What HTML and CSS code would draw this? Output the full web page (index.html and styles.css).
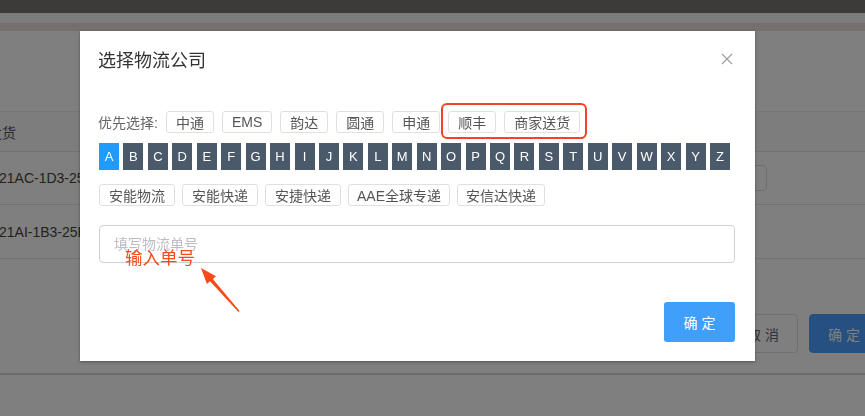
FILE: index.html
```html
<!DOCTYPE html>
<html lang="zh-CN">
<head>
<meta charset="utf-8">
<title>选择物流公司</title>
<link rel="stylesheet" href="styles.css">
</head>
<body>
<div class="page">
  <div class="topbar"></div>
  <div class="band"><div class="band-a"></div><div class="band-b"></div></div>
  <div class="main">
    <div class="table">
      <div class="tr th"><span class="cell head-cell">发货</span></div>
      <div class="tr"><span class="cell">21AC-1D3-25B6</span><span class="field"></span></div>
      <div class="tr"><span class="cell">21AI-1B3-25E8</span></div>
    </div>
    <div class="actions">
      <button class="btn">取 消</button>
      <button class="btn btn-primary">确 定</button>
    </div>
  </div>
</div>
<div class="mask"></div>
<div class="modal">
  <div class="modal-head">
    <h2 class="modal-title">选择物流公司</h2>
    <svg class="close" width="12" height="12" viewBox="0 0 12 12"><path d="M1 1 L11 11 M11 1 L1 11" stroke="#a0a0a0" stroke-width="1.2" fill="none"/></svg>
  </div>
  <div class="modal-body">
    <div class="prio">
      <span class="prio-label">优先选择:</span>
      <span class="tag">中通</span>
      <span class="tag">EMS</span>
      <span class="tag">韵达</span>
      <span class="tag">圆通</span>
      <span class="tag">申通</span>
      <span class="mark">
        <span class="tag">顺丰</span>
        <span class="tag">商家送货</span>
      </span>
    </div>
    <div class="letters">
      <span class="letter active">A</span><span class="letter">B</span><span class="letter">C</span><span class="letter">D</span><span class="letter">E</span><span class="letter">F</span><span class="letter">G</span><span class="letter">H</span><span class="letter">I</span><span class="letter">J</span><span class="letter">K</span><span class="letter">L</span><span class="letter">M</span><span class="letter">N</span><span class="letter">O</span><span class="letter">P</span><span class="letter">Q</span><span class="letter">R</span><span class="letter">S</span><span class="letter">T</span><span class="letter">U</span><span class="letter">V</span><span class="letter">W</span><span class="letter">X</span><span class="letter">Y</span><span class="letter">Z</span>
    </div>
    <div class="companies">
      <span class="tag">安能物流</span>
      <span class="tag">安能快递</span>
      <span class="tag">安捷快递</span>
      <span class="tag tag-tight">AAE全球专递</span>
      <span class="tag tag-tight">安信达快递</span>
    </div>
    <input class="tracking" type="text" placeholder="填写物流单号">
    <div class="modal-foot">
      <button class="confirm">确 定</button>
    </div>
  </div>
  <span class="note">输入单号</span>
  <svg class="arrow" width="50" height="54" viewBox="0 0 50 54">
    <polygon points="6,6 21,14.2 17.8,16.9 44.6,49 43.4,50 15,19.3 11.9,22" fill="#f74b1b"/>
  </svg>
</div>
</body>
</html>
```

FILE: styles.css
```css
* { box-sizing: border-box; }
html, body {
  margin: 0;
  padding: 0;
  width: 865px;
  height: 416px;
  overflow: hidden;
  font-family: "Liberation Sans", "Noto Sans CJK SC", sans-serif;
  background: #ffffff;
}
.page {
  width: 865px;
  height: 416px;
  display: flex;
  flex-direction: column;
}
.topbar { height: 13px; background: #7a7474; }
.band { display: flex; flex-direction: column; }
.band-a { height: 10px; background: #f8f8f8; }
.band-b { height: 8px; background: #eedfdc; }
.main {
  padding-top: 80px;
  display: flex;
  flex-direction: column;
  border-bottom: 2px solid #d6d6d6;
  padding-bottom: 20px;
}
.table { margin-left: -12px; display: flex; flex-direction: column; }
.tr {
  display: flex;
  align-items: center;
  border-bottom: 1px solid #e4e4e4;
  height: 53px;
  font-size: 14px;
  color: #444;
}
.tr:last-child { height: 54px; }
.th {
  height: 41px;
  border-top: 1px solid #ececec;
  background: #fbfbfb;
  color: #555;
}
.cell { padding-left: 11px; }
.head-cell { padding-left: 0; }
.field {
  margin-left: auto;
  margin-right: 98px;
  width: 120px;
  height: 26px;
  border: 1px solid #dcdcdc;
  border-radius: 4px;
}
.actions {
  display: flex;
  justify-content: flex-end;
  gap: 11px;
  margin-top: 55px;
  margin-right: -14px;
}
.btn {
  width: 70px;
  height: 39px;
  border: 1px solid #e0e0e0;
  border-radius: 4px;
  background: #ffffff;
  color: #666;
  font-family: inherit;
  font-size: 14px;
  padding: 0;
}
.btn-primary {
  background: #4aa0fe;
  border-color: #4aa0fe;
  color: #ffffff;
}
.mask {
  position: fixed;
  inset: 0;
  background: rgba(0, 0, 0, 0.5);
}
.modal {
  position: absolute;
  left: 80px;
  top: 31px;
  width: 675px;
  height: 330px;
  background: #ffffff;
  box-shadow: 0 1px 3px rgba(0, 0, 0, 0.35);
  display: flex;
  flex-direction: column;
}
.modal-head {
  display: flex;
  justify-content: space-between;
  align-items: center;
  padding: 18px 22px 0 18px;
}
.modal-title {
  margin: 0;
  font-size: 18px;
  line-height: 24px;
  font-weight: normal;
  color: #333;
}
.close { margin-top: -4px; }
.modal-body {
  padding: 38px 20px 0 19px;
  display: flex;
  flex-direction: column;
}
.prio, .companies {
  display: flex;
  align-items: center;
  gap: 8px;
  height: 22px;
}
.companies { gap: 7px; margin-top: 14px; }
.prio-label {
  font-size: 14px;
  color: #666;
  width: 60px;
  margin-left: -1px;
  margin-right: 0;
}
.tag {
  display: inline-flex;
  align-items: center;
  justify-content: center;
  height: 22px;
  padding: 0 9px;
  border: 1px solid #e0e0e0;
  border-radius: 3px;
  font-size: 14px;
  color: #555;
  white-space: nowrap;
}
.tag-tight { padding: 0 8px; }
.mark {
  display: inline-flex;
  align-items: center;
  gap: 8px;
  padding: 6px 5px 4px;
  margin: -8px -7px -6px;
  border: 2px solid #f04423;
  border-radius: 6px;
}
.letters {
  display: flex;
  gap: 4.44px;
  margin-top: 10px;
  height: 27px;
}
.letter {
  width: 20px;
  height: 27px;
  display: flex;
  align-items: center;
  justify-content: center;
  background: #4b5a6b;
  color: #ffffff;
  font-size: 13px;
}
.letter.active { background: #1e9bfd; }
.tracking {
  margin-top: 19px;
  width: 636px;
  height: 38px;
  border: 1px solid #cfd0d6;
  border-radius: 4px;
  padding: 0 14px;
  font-family: inherit;
  font-size: 14px;
  color: #333;
  outline: none;
}
.tracking::placeholder { color: #bcbcc4; }
.modal-foot {
  display: flex;
  justify-content: flex-end;
  margin-top: 39px;
}
.confirm {
  width: 71px;
  height: 40px;
  border: none;
  border-radius: 3px;
  background: #409ffa;
  color: #ffffff;
  font-family: inherit;
  font-size: 14px;
  padding: 0;
}
.note {
  position: absolute;
  left: 45px;
  top: 217px;
  font-size: 17.5px;
  line-height: 20px;
  color: #f74b1b;
}
.arrow {
  position: absolute;
  left: 115px;
  top: 231px;
}
```
